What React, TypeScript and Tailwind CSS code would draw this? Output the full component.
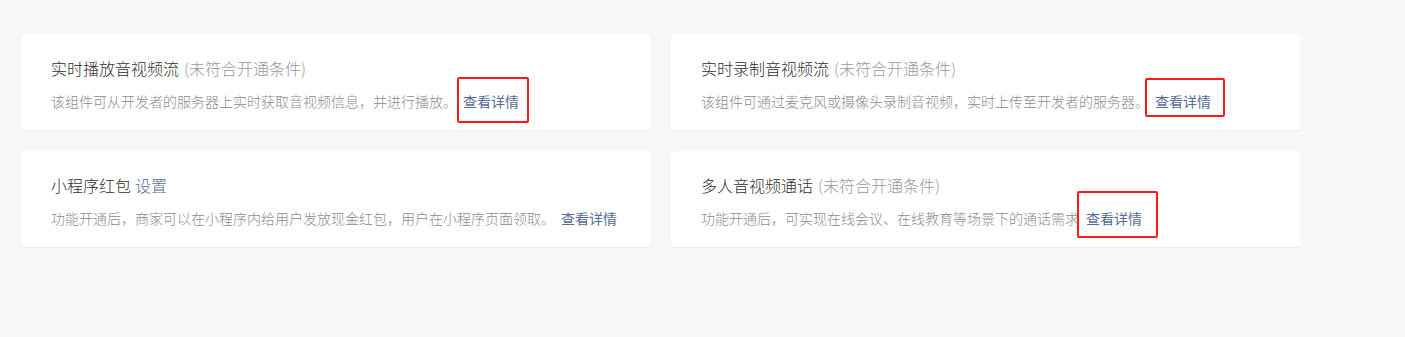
import React from "react";

type Card = {
  title: string;
  titleExtra?: { text: string; link?: boolean };
  desc: string;
  gap: string;
  box?: string;
};

const cards: Card[] = [
  {
    title: "实时播放音视频流",
    titleExtra: { text: "(未符合开通条件)" },
    desc: "该组件可从开发者的服务器上实时获取音视频信息，并进行播放。",
    gap: "ml-[6px]",
    box: "left-[-6px] right-[-10px] top-[-14px] bottom-[-12px]",
  },
  {
    title: "实时录制音视频流",
    titleExtra: { text: "(未符合开通条件)" },
    desc: "该组件可通过麦克风或摄像头录制音视频，实时上传至开发者的服务器。",
    gap: "ml-[6px]",
    box: "left-[-10px] right-[-14px] top-[-13px] bottom-[-6px]",
  },
  {
    title: "小程序红包",
    titleExtra: { text: "设置", link: true },
    desc: "功能开通后，商家可以在小程序内给用户发放现金红包，用户在小程序页面领取。",
    gap: "ml-[6px]",
  },
  {
    title: "多人音视频通话",
    titleExtra: { text: "(未符合开通条件)" },
    desc: "功能开通后，可实现在线会议、在线教育等场景下的通话需求",
    gap: "ml-[7px]",
    box: "left-[-9px] right-[-16px] top-[-17px] bottom-[-10px]",
  },
];

export default function App() {
  return (
    <div
      className="w-[1405px] h-[337px] bg-[#f6f7f9] pt-[34px] pl-[21px]"
      style={{ fontFamily: '"Noto Sans CJK SC", "Noto Sans", sans-serif' }}
    >
      <div className="grid grid-cols-[630px_630px] gap-x-[20px] gap-y-[21px]">
        {cards.map((c, i) => (
          <div
            key={i}
            className="h-[96px] bg-white rounded-[4px] shadow-[0_1px_2px_rgba(0,0,0,0.05)] pl-[30px] pt-[22px]"
          >
            <div className="text-[16px] leading-[24px] font-light text-[#2f2f2f] whitespace-nowrap">
              {c.title}
              {c.titleExtra && (
                <span
                  className={
                    c.titleExtra.link
                      ? "ml-[4px] text-[#576b95]"
                      : "ml-[5px] text-[#9a9a9a]"
                  }
                >
                  {c.titleExtra.text}
                </span>
              )}
            </div>
            <div className="mt-[11px] text-[14px] leading-[20px] font-light text-[#8c8c8c] whitespace-nowrap flex items-center">
              <span>{c.desc}</span>
              <span className={`relative ${c.gap} font-normal text-[#576b95] text-[14px]`}>
                查看详情
                {c.box && (
                  <span
                    className={`absolute ${c.box} border-2 border-[#ff1a1a] rounded-[2px]`}
                  />
                )}
              </span>
            </div>
          </div>
        ))}
      </div>
    </div>
  );
}
